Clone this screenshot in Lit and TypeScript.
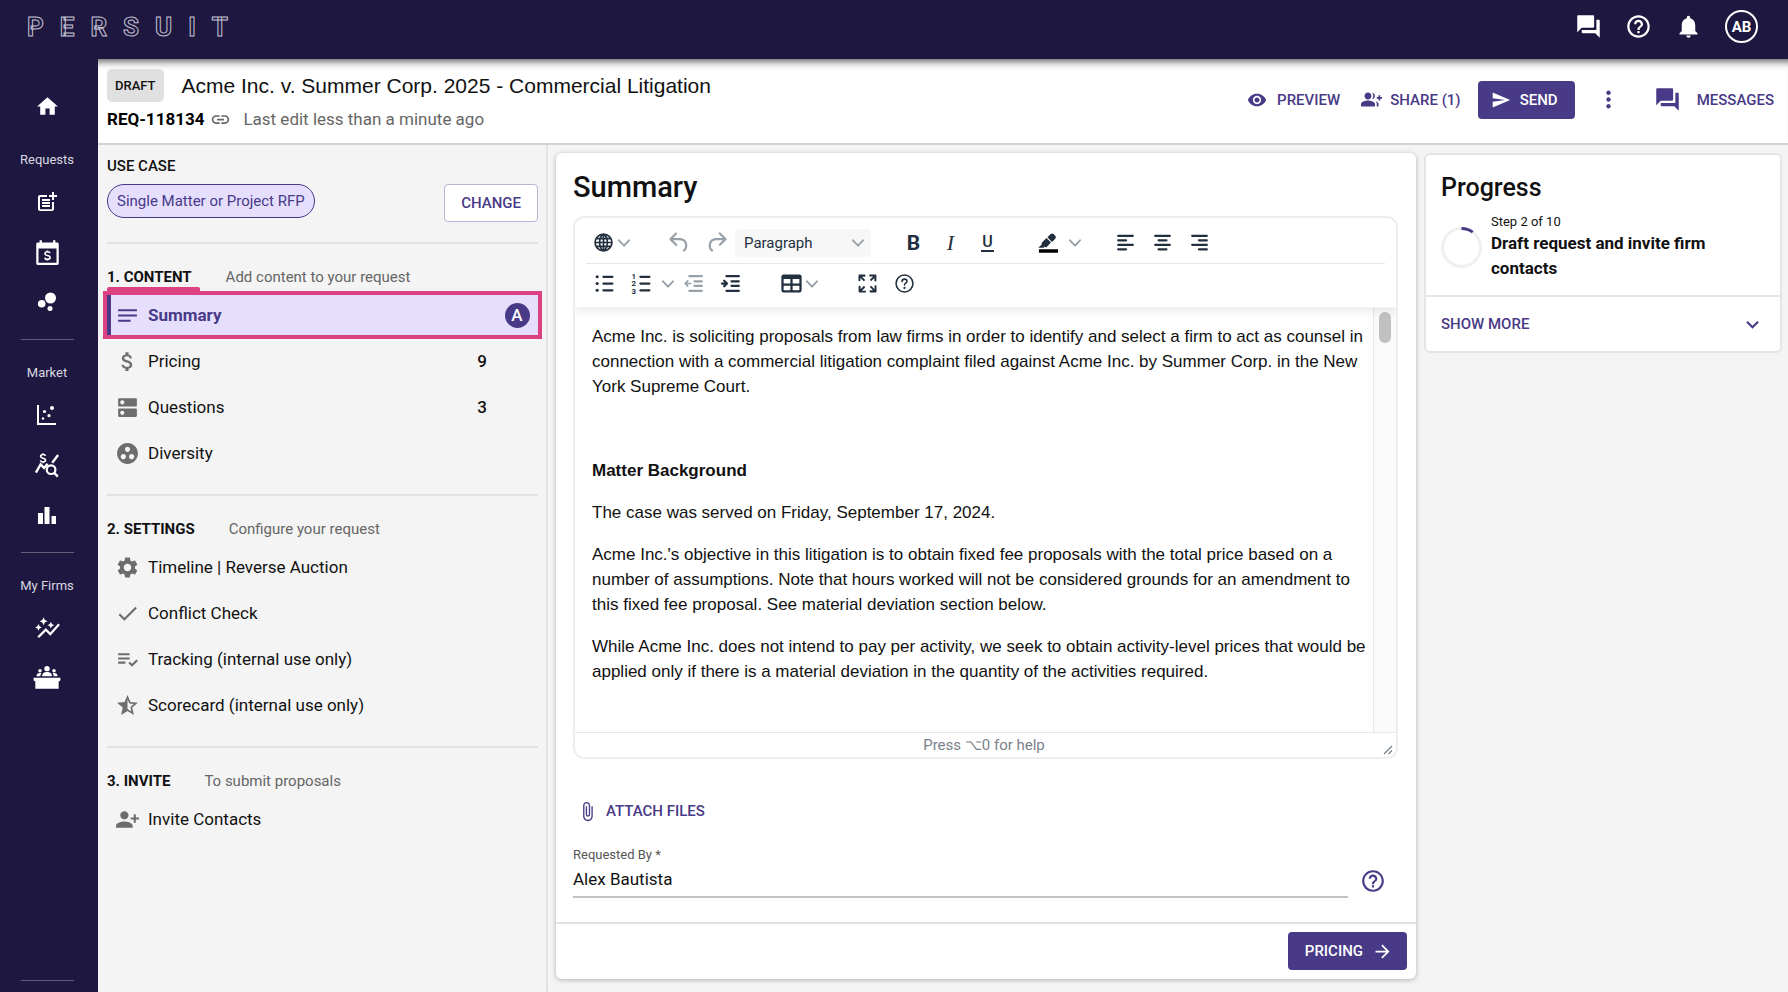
import { LitElement, html, css, svg, nothing, type TemplateResult } from "lit";
import { customElement, state } from "lit/decorators.js";
import { classMap } from "lit/directives/class-map.js";

const P = {
  home: "M10 20v-6h4v6h5v-8h3L12 3 2 12h3v8z",
  forum: "M21 6h-2v9H6v2c0 .55.45 1 1 1h11l4 4V7c0-.55-.45-1-1-1zm-4 6V3c0-.55-.45-1-1-1H3c-.55 0-1 .45-1 1v14l4-4h10c.55 0 1-.45 1-1z",
  help: "M11 18h2v-2h-2v2zm1-16C6.48 2 2 6.48 2 12s4.48 10 10 10 10-4.48 10-10S17.52 2 12 2zm0 18c-4.41 0-8-3.59-8-8s3.59-8 8-8 8 3.59 8 8-3.59 8-8 8zm0-14c-2.21 0-4 1.79-4 4h2c0-1.1.9-2 2-2s2 .9 2 2c0 2-3 1.75-3 5h2c0-2.25 3-2.5 3-5 0-2.21-1.79-4-4-4z",
  bell: "M12 22c1.1 0 2-.9 2-2h-4c0 1.1.89 2 2 2zm6-6v-5c0-3.07-1.64-5.64-4.5-6.32V4c0-.83-.67-1.5-1.5-1.5s-1.5.67-1.5 1.5v.68C7.63 5.36 6 7.92 6 11v5l-2 2v1h16v-1l-2-2z",
  eye: "M12 4.5C7 4.5 2.73 7.61 1 12c1.73 4.39 6 7.5 11 7.5s9.27-3.11 11-7.5c-1.73-4.39-6-7.5-11-7.5zM12 17c-2.76 0-5-2.24-5-5s2.24-5 5-5 5 2.24 5 5-2.24 5-5 5zm0-8c-1.66 0-3 1.34-3 3s1.34 3 3 3 3-1.34 3-3-1.34-3-3-3z",
  groupAdd: "M22 9V7h-2v2h-2v2h2v2h2v-2h2V9zM8 12c2.21 0 4-1.79 4-4s-1.79-4-4-4-4 1.79-4 4 1.79 4 4 4zm0 1c-2.67 0-8 1.34-8 4v3h16v-3c0-2.66-5.33-4-8-4zM12.51 4.05C13.43 5.11 14 6.49 14 8s-.57 2.89-1.49 3.95C14.47 11.7 16 10.04 16 8s-1.53-3.7-3.49-3.95zM16.53 13.83C17.42 14.66 18 15.7 18 17v3h2v-3c0-1.45-1.59-2.51-3.47-3.17z",
  send: "M2.01 21L23 12 2.01 3 2 10l15 2-15 2z",
  more: "M12 8c1.1 0 2-.9 2-2s-.9-2-2-2-2 .9-2 2 .9 2 2 2zm0 2c-1.1 0-2 .9-2 2s.9 2 2 2 2-.9 2-2-.9-2-2-2zm0 6c-1.1 0-2 .9-2 2s.9 2 2 2 2-.9 2-2-.9-2-2-2z",
  link: "M3.9 12c0-1.71 1.39-3.1 3.1-3.1h4V7H7c-2.76 0-5 2.24-5 5s2.24 5 5 5h4v-1.9H7c-1.71 0-3.1-1.39-3.1-3.1zM8 13h8v-2H8v2zm9-6h-4v1.9h4c1.71 0 3.1 1.39 3.1 3.1s-1.39 3.1-3.1 3.1h-4V17h4c2.76 0 5-2.24 5-5s-2.24-5-5-5z",
  notes: "M3 18h12v-2H3v2zM3 6v2h18V6H3zm0 7h18v-2H3v2z",
  money: "M11.8 10.9c-2.27-.59-3-1.2-3-2.15 0-1.09 1.01-1.85 2.7-1.85 1.78 0 2.44.85 2.5 2.1h2.21c-.07-1.72-1.12-3.3-3.21-3.81V3h-3v2.16c-1.94.42-3.5 1.68-3.5 3.61 0 2.31 1.91 3.46 4.7 4.13 2.5.6 3 1.48 3 2.41 0 .69-.49 1.79-2.7 1.79-2.06 0-2.87-.92-2.98-2.1h-2.2c.12 2.19 1.76 3.42 3.68 3.83V21h3v-2.15c1.95-.37 3.5-1.5 3.5-3.55 0-2.84-2.43-3.81-4.7-4.4z",
  dns: "M20 13H4c-.55 0-1 .45-1 1v6c0 .55.45 1 1 1h16c.55 0 1-.45 1-1v-6c0-.55-.45-1-1-1zM7 19c-1.1 0-2-.9-2-2s.9-2 2-2 2 .9 2 2-.9 2-2 2zM20 3H4c-.55 0-1 .45-1 1v6c0 .55.45 1 1 1h16c.55 0 1-.45 1-1V4c0-.55-.45-1-1-1zM7 9c-1.1 0-2-.9-2-2s.9-2 2-2 2 .9 2 2-.9 2-2 2z",
  groupWork: "M12 2C6.48 2 2 6.48 2 12s4.48 10 10 10 10-4.48 10-10S17.52 2 12 2zM8 17.5c-1.38 0-2.5-1.12-2.5-2.5s1.12-2.5 2.5-2.5 2.5 1.12 2.5 2.5-1.12 2.5-2.5 2.5zM9.5 8c0-1.38 1.12-2.5 2.5-2.5s2.5 1.12 2.5 2.5-1.12 2.5-2.5 2.5S9.5 9.38 9.5 8zm6.5 9.5c-1.38 0-2.5-1.12-2.5-2.5s1.12-2.5 2.5-2.5 2.5 1.12 2.5 2.5-1.12 2.5-2.5 2.5z",
  settings: "M19.14 12.94c.04-.3.06-.61.06-.94 0-.32-.02-.64-.07-.94l2.03-1.58c.18-.14.23-.41.12-.61l-1.92-3.32c-.12-.22-.37-.29-.59-.22l-2.39.96c-.5-.38-1.03-.7-1.62-.94l-.36-2.54c-.04-.24-.24-.41-.48-.41h-3.84c-.24 0-.43.17-.47.41l-.36 2.54c-.59.24-1.13.57-1.62.94l-2.39-.96c-.22-.08-.47 0-.59.22L2.74 8.87c-.12.21-.08.47.12.61l2.03 1.58c-.05.3-.09.63-.09.94s.02.64.07.94l-2.03 1.58c-.18.14-.23.41-.12.61l1.92 3.32c.12.22.37.29.59.22l2.39-.96c.5.38 1.03.7 1.62.94l.36 2.54c.05.24.24.41.48.41h3.84c.24 0 .44-.17.47-.41l.36-2.54c.59-.24 1.13-.56 1.62-.94l2.39.96c.22.08.47 0 .59-.22l1.92-3.32c.12-.22.07-.47-.12-.61l-2.01-1.58zM12 15.6c-1.98 0-3.6-1.62-3.6-3.6s1.62-3.6 3.6-3.6 3.6 1.62 3.6 3.6-1.62 3.6-3.6 3.6z",
  check: "M9 16.17L4.83 12l-1.42 1.41L9 19 21 7l-1.41-1.41z",
  listCheck: "M3 10h11v2H3zM3 6h11v2H3zM3 14h7v2H3zM20.59 11.93l-4.25 4.24-2.12-2.12-1.41 1.41 3.53 3.53L22 13.34z",
  starHalf: "M22 9.24l-7.19-.62L12 2 9.19 8.63 2 9.24l5.46 4.73L5.82 21 12 17.27 18.18 21l-1.63-7.03L22 9.24zM12 15.4V6.1l1.71 4.04 4.38.38-3.32 2.88 1 4.28L12 15.4z",
  personAdd: "M13 8c0-2.21-1.79-4-4-4S5 5.79 5 8s1.79 4 4 4 4-1.79 4-4zm2 2v2h3v3h2v-3h3v-2h-3V7h-2v3h-3zM1 18v2h16v-2c0-2.66-5.33-4-8-4s-8 1.34-8 4z",
  postAdd: "M17 19.22H5V7h7V5H5c-1.1 0-2 .9-2 2v12c0 1.1.9 2 2 2h12c1.1 0 2-.9 2-2v-7h-2v7.22zM19 2h-2v3h-3v2h3v3h2V7h3V5h-3V2zM7 9h8v2H7zM7 12v2h8v-2h-3zM7 15h8v2H7z",
  autoGraph: "M14.06 9.94L12 9l2.06-.94L15 6l.94 2.06L18 9l-2.06.94L15 12l-.94-2.06zM4 14l.94-2.06L7 11l-2.06-.94L4 8l-.94 2.06L1 11l2.06.94L4 14zm4.5-5l1.09-2.41L12 5.5 9.59 4.41 8.5 2 7.41 4.41 5 5.5l2.41 1.09L8.5 9zm-4 11.5l6-6.01 4 4L23 8.93l-1.41-1.41-7.09 7.97-4-4L3 19l1.5 1.5z",
  attach: "M16.5 6v11.5c0 2.21-1.79 4-4 4s-4-1.79-4-4V5c0-1.38 1.12-2.5 2.5-2.5s2.5 1.12 2.5 2.5v10.5c0 .55-.45 1-1 1s-1-.45-1-1V6H10v9.5c0 1.38 1.12 2.5 2.5 2.5s2.5-1.12 2.5-2.5V5c0-2.21-1.79-4-4-4S7 2.79 7 5v12.5c0 3.04 2.46 5.5 5.5 5.5s5.5-2.46 5.5-5.5V6h-1.5z",
  arrow: "M12 4l-1.41 1.41L16.17 11H4v2h12.17l-5.58 5.59L12 20l8-8z",
  expand: "M16.59 8.59L12 13.17 7.41 8.59 6 10l6 6 6-6z",
  undo: "M6.4 8H12c3.7 0 6.2 2 6.8 5.1.6 2.7-.4 5.6-2.3 6.8a1 1 0 0 1-1-1.8c1.1-.6 1.8-2.7 1.4-4.6-.5-2.1-2.1-3.5-4.9-3.5H6.4l3.3 3.3a1 1 0 1 1-1.4 1.4l-5-5a1 1 0 0 1 0-1.4l5-5a1 1 0 0 1 1.4 1.4L6.4 8Z",
  redo: "M17.6 10H12c-2.8 0-4.4 1.4-4.9 3.5-.4 2 .3 4 1.4 4.6a1 1 0 1 1-1 1.8c-2-1.2-2.9-4.1-2.3-6.8.6-3 3-5.1 6.8-5.1h5.6l-3.3-3.3a1 1 0 1 1 1.4-1.4l5 5a1 1 0 0 1 0 1.4l-5 5a1 1 0 0 1-1.4-1.4l3.3-3.3Z",
  table: "M19 4a2 2 0 0 1 2 2v12a2 2 0 0 1-2 2H5a2 2 0 0 1-2-2V6c0-1.1.9-2 2-2h14ZM5 14v4h6v-4H5Zm14 0h-6v4h6v-4Zm0-6h-6v4h6V8ZM5 12h6V8H5v4Z",
  fullscreen: "m15.3 10-1.2-1.3 2.9-3h-2.3a.9.9 0 1 1 0-1.7H19c.5 0 .9.4.9.9v4.4a.9.9 0 1 1-1.8 0V7l-2.9 3Zm0 4 3 3v-2.3a.9.9 0 1 1 1.7 0V19c0 .5-.4.9-.9.9h-4.4a.9.9 0 1 1 0-1.8H17l-3-2.9 1.3-1.2ZM10 15.4l-2.9 3h2.3a.9.9 0 1 1 0 1.7H5a.9.9 0 0 1-.9-.9v-4.4a.9.9 0 1 1 1.8 0V17l2.9-3 1.2 1.3ZM8.7 10 5.7 7v2.3a.9.9 0 0 1-1.7 0V5c0-.5.4-.9.9-.9h4.4a.9.9 0 0 1 0 1.8H7l3 2.9-1.3 1.2Z",
  pen: "M7.7 16.7H3l3.3-3.3-.7-.8L10.2 8l4 4.1-4 4.2c-.2.2-.6.2-.8 0l-.6-.7-1.1 1.1zm5-7.5L11 7.4l3-2.9a2 2 0 0 1 2.6 0L18 6c.7.7.7 2 0 2.7l-2.9 2.9-1.8-1.8-.5-.6",
};

const box = (size: number, body: unknown) => html`<svg
  width=${size} height=${size} viewBox="0 0 24 24" fill="currentColor" aria-hidden="true">${body}</svg>`;
const icon = (d: string, size = 24) => box(size, svg`<path d=${d}></path>`);
const lines = (d: string, width = 2) => svg`<path d=${d} fill="none" stroke="currentColor"
  stroke-width=${width} stroke-linecap="round" stroke-linejoin="round"></path>`;

const chevron = html`<svg class="chev" width="12" height="12" viewBox="0 0 10 10" fill="currentColor" aria-hidden="true"><path
  d="M8.7 2.2c.3-.3.8-.3 1 0 .4.4.4.9 0 1.2L5.7 7.8c-.3.3-.9.3-1.2 0L.2 3.4a.8.8 0 0 1 0-1.2c.3-.3.8-.3 1.1 0L5 6l3.7-3.8z"></path></svg>`;

const dollar = "M2.6-2.6C2.4-3.6 1.4-4 0-4s-2.6.7-2.6 2S-1.400-.3 0 0s2.700.7 2.700 2S1.500 4 0 4s-2.600-.6-2.800-1.700M0-5.300V-4M0 4v1.300";

const calendar = box(27, svg`
  <path fill-rule="evenodd" d="M5 1h2v2h10V1h2v2h1.500c.9 0 1.500.6 1.500 1.500v17c0 .9-.6 1.500-1.500 1.500h-17C2.600 23 2 22.400 2 21.500v-17C2 3.600 2.600 3 3.500 3H5zM4 8.500V21h16V8.500z"></path>
  <g transform="translate(12 14.700) scale(.85)"><path d=${dollar} fill="none" stroke="currentColor" stroke-width="1.700"></path></g>`);
const bubbles = box(24, svg`<circle cx="6.700" cy="13.800" r="3.800"></circle><circle cx="15.500" cy="8" r="5.500"></circle><circle cx="15" cy="18.500" r="2.500"></circle>`);
const scatter = box(24, svg`<path d="M2 2h2v18h17v2H2z"></path>
  <circle cx="17" cy="5" r="2"></circle><circle cx="9.500" cy="8.500" r="1.600"></circle>
  <circle cx="14" cy="12.700" r="1.600"></circle><circle cx="8" cy="15.500" r="1.200"></circle>`);
const marketQuery = box(28, svg`
  <g transform="translate(8.600 6.200) scale(.8)"><path d=${dollar} fill="none" stroke="currentColor" stroke-width="1.700"></path></g>
  <path d="M2.500 18.500 6.500 11.500l3 3 3-3.500M16.500 10 21.500 3.500" fill="none" stroke="currentColor" stroke-width="2"></path>
  <circle cx="15.500" cy="16" r="3.700" fill="none" stroke="currentColor" stroke-width="1.900"></circle>
  <path d="m18 18.500 3.300 3.500" stroke="currentColor" stroke-width="2"></path>`);
const bars = box(24, svg`<path d="M3 10h5v11H3zM9.500 4h5v17h-5zM16.500 13h4.500v8h-4.500z"></path>`);
const podium = box(28, svg`
  <circle cx="12" cy="4" r="2.300"></circle><path d="M7.800 10.500c0-2.700 1.800-3.600 4.200-3.600s4.200.9 4.200 3.600z"></path>
  <circle cx="6" cy="5.800" r="1.500"></circle><path d="M3 10.500c0-2 1-2.800 3-2.800.5 0 .9.100 1.200.2-.6.7-.9 1.500-.9 2.600z"></path>
  <circle cx="18" cy="5.800" r="1.500"></circle><path d="M21 10.500c0-2-1-2.800-3-2.800-.5 0-.9.100-1.200.2.6.7.900 1.500.9 2.600z"></path>
  <path d="M.5 11.700h23v1.800c0 .8-.4 1.200-1.200 1.200H22v6.600H2v-6.600h-.3c-.8 0-1.200-.4-1.200-1.200z"></path>`);

const globe = box(27, lines("M12 4.500a7.500 7.500 0 1 0 0 15 7.500 7.500 0 0 0 0-15zM12 4.500c-4.600 3-4.600 12 0 15M12 4.500c4.600 3 4.600 12 0 15M12 4.500v15M4.500 12h15M5.500 8.500h13M5.500 15.500h13", 1.500));
const bullets = box(27, svg`${lines("M11 6h8M11 12h8M11 18h8")}<circle cx="5.500" cy="6" r="1.400"></circle><circle cx="5.500" cy="12" r="1.400"></circle><circle cx="5.500" cy="18" r="1.400"></circle>`);
const numbers = box(27, svg`${lines("M11 6h8M11 12h8M11 18h8")}
  <g font-family="Roboto, sans-serif" font-size="7" font-weight="700"><text x="3" y="8">1</text><text x="3" y="14.500">2</text><text x="3" y="21">3</text></g>`);
const outdent = box(27, svg`${lines("M7.500 5.500h11M12 10h6.500M12 14h6.500M7.500 18.500h11")}${lines("M6 9.700 3.700 12 6 14.300M4.500 12h4", 1.500)}`);
const indent = box(27, svg`${lines("M7.500 5.500h11M12 10h6.500M12 14h6.500M7.500 18.500h11")}${lines("M5.500 9.500 8 12l-2.500 2.500M3.500 12H7", 2)}`);
const alignLeft = box(27, lines("M5.500 6h13M5.500 10h7M5.500 14h13M5.500 18h7"));
const alignCenter = box(27, lines("M5.500 6h13M8.500 10h7M5.500 14h13M8.500 18h7"));
const alignRight = box(27, lines("M5.500 6h13M11.500 10h7M5.500 14h13M11.500 18h7"));
const highlight = box(27, svg`<path d=${P.pen}></path><path d="M3.500 18h17v3h-17z" fill="#000"></path>`);
const toolHelp = box(27, svg`${lines("M12 4.500a7.500 7.500 0 1 0 0 15 7.500 7.500 0 0 0 0-15zM9.800 10.300c0-1.400 1-2.200 2.200-2.200s2.200.8 2.200 2c0 1.600-2.200 1.600-2.200 3.200", 1.400)}<circle cx="12" cy="15.900" r="1"></circle>`);

interface Row { label: string; icon: string; count?: number; badge?: string }
interface Section { title: string; hint: string; marked?: boolean; rows: Row[] }

const SECTIONS: Section[] = [
  { title: "1. CONTENT", hint: "Add content to your request", marked: true, rows: [
    { label: "Summary", icon: P.notes, badge: "A" },
    { label: "Pricing", icon: P.money, count: 9 },
    { label: "Questions", icon: P.dns, count: 3 },
    { label: "Diversity", icon: P.groupWork },
  ] },
  { title: "2. SETTINGS", hint: "Configure your request", rows: [
    { label: "Timeline | Reverse Auction", icon: P.settings },
    { label: "Conflict Check", icon: P.check },
    { label: "Tracking (internal use only)", icon: P.listCheck },
    { label: "Scorecard (internal use only)", icon: P.starHalf },
  ] },
  { title: "3. INVITE", hint: "To submit proposals", rows: [
    { label: "Invite Contacts", icon: P.personAdd },
  ] },
];

const NAV: { label: string; items: { name: string; icon: TemplateResult }[] }[] = [
  { label: "Requests", items: [
    { name: "New request", icon: icon(P.postAdd, 24) },
    { name: "Fee schedule", icon: calendar },
    { name: "Insights", icon: bubbles },
  ] },
  { label: "Market", items: [
    { name: "Market scatter", icon: scatter },
    { name: "Rate search", icon: marketQuery },
    { name: "Benchmarks", icon: bars },
  ] },
  { label: "My Firms", items: [
    { name: "Firm trends", icon: icon(P.autoGraph, 27) },
    { name: "Panel", icon: podium },
  ] },
];

@customElement("app-root")
export class AppRoot extends LitElement {
  @state() private selected = "Summary";

  static styles = css`
    :host {
      --ink: #1e173f;
      --brand: #483a87;
      --tint: #e5defd;
      --line: #e2e6e6;
      display: grid;
      grid-template-rows: auto minmax(0, 1fr);
      min-height: 100vh;
      height: 100vh;
      background: #f4f4f4;
      color: #111;
      font: 400 17px/22px Roboto, sans-serif;
    }
    * { box-sizing: border-box; }
    svg { display: block; flex: none; }
    h1, h2, h3, p, ul { margin: 0; padding: 0; font: inherit; }
    ul { list-style: none; }
    button, input, select { font: inherit; color: inherit; margin: 0; }
    button { background: none; border: 0; padding: 0; cursor: pointer; white-space: nowrap; }
    a { color: inherit; text-decoration: none; }

    .top {
      display: flex; align-items: center; justify-content: space-between;
      height: 59px; padding: 0 30px 6px 27px;
      background: var(--ink); color: #fff;
    }
    .logo {
      display: flex; gap: 16px;
      font-size: 26px; line-height: 30px; font-weight: 700;
      color: var(--ink); -webkit-text-stroke: 1px #c4c1d2;
    }
    .top nav { display: flex; align-items: center; gap: 23px; }
    .avatar {
      width: 33px; height: 33px; border: 2px solid #fff; border-radius: 50%;
      font-size: 15px; line-height: 28px; font-weight: 700;
    }

    .shell { display: grid; grid-template-columns: 98px minmax(0, 1fr); min-height: 0; }
    .side {
      display: flex; flex-direction: column; align-items: center;
      padding: 22px 4px 11px 0; background: var(--ink); color: #fff;
    }
    .side a { display: grid; place-items: center; width: 53px; height: 50px; }
    .side section {
      display: flex; flex-direction: column; align-items: center;
      width: 53px; margin-top: 12px; padding-top: 21px; border-top: 1px solid #625d79;
    }
    .side section:first-of-type { margin-top: 0; padding-top: 16px; border-color: transparent; }
    .side h2 { margin-bottom: 5px; font-size: 13px; line-height: 24px; color: #d9d7e2; white-space: nowrap; }
    .side hr { width: 53px; margin: auto 0 0; border: 0; border-top: 1px solid #625d79; }

    .main { display: grid; grid-template-rows: auto minmax(0, 1fr); min-height: 0; min-width: 0; }
    .bar {
      display: flex; align-items: center; justify-content: space-between;
      padding: 10px 14px 13px 9px; background: #fff; border-bottom: 2px solid #cfd4d4;
      box-shadow: inset 0 10px 9px -8px rgba(0, 0, 0, .7);
    }
    .bar-title { display: flex; align-items: center; gap: 18px; font: 400 21px/33px "Liberation Sans", Arial, sans-serif; }
    .draft {
      padding: 0 8px; border-radius: 5px; background: #e0e0e0;
      font: 500 13px/33px Roboto, sans-serif;
    }
    .bar-meta { display: flex; align-items: center; gap: 6px; margin-top: 6px; color: #666; }
    .bar-meta strong { color: #000; }
    .bar-meta span { margin-left: 6px; }
    .actions { display: flex; align-items: center; color: var(--brand); font-size: 15px; font-weight: 500; }
    .actions button { display: flex; align-items: center; height: 38px; gap: 10px; }
    .actions .share { margin-left: 21px; gap: 8px; }
    .actions .send { margin: 0 20px 0 17px; padding: 0 17px 0 13px; gap: 9px; }
    .actions .messages { margin-left: 32px; gap: 16px; }
    .solid { display: flex; align-items: center; height: 38px; border-radius: 4px; background: var(--brand); color: #fff; font-size: 15px; font-weight: 500; }

    .columns { display: grid; grid-template-columns: 450px minmax(0, 1fr) 364px; min-height: 0; }
    .steps { padding: 10px 8px 0 9px; border-right: 2px solid #e3e3e3; }
    .label { font-size: 15px; font-weight: 500; }
    .case { display: flex; justify-content: space-between; align-items: flex-start; padding: 7px 0 20px; }
    .chip {
      padding: 0 9px; border: 1px solid var(--brand); border-radius: 17px;
      background: var(--tint); color: var(--brand); font-size: 15px; line-height: 32px;
    }
    .change {
      height: 38px; padding: 0 16px; border: 1px solid #b9b3d6; border-radius: 4px;
      background: #fff; color: var(--brand); font-size: 15px; font-weight: 500;
    }
    .step { padding: 22px 0 21px; border-top: 2px solid #e1e1e1; }
    .step header { display: flex; gap: 34px; margin-bottom: 7px; }
    .step header .label { font-weight: 700; }
    .step header p { font-size: 15px; color: #666; }
    .marked .label { position: relative; }
    .marked .label::after {
      content: ""; position: absolute; left: 0; right: -8px; bottom: -5px; height: 6px;
      border-radius: 2px; background: #dc4281;
    }
    .step ul { display: grid; gap: 6px; }
    .row {
      display: grid; grid-template-columns: 25px 1fr 12px 42px; align-items: center;
      column-gap: 8px; width: 100%; height: 40px; padding-left: 8px; text-align: left;
    }
    .row svg { color: #6d6d6d; }
    .row .count { grid-column: 3; font-weight: 500; text-align: center; }
    .row.on {
      padding-left: 4px; border-left: 4px solid var(--brand); background: var(--tint);
      outline: 4px solid #dc4281; color: var(--brand); font-weight: 700;
    }
    .row.on svg { color: var(--brand); }
    .row .badge {
      grid-column: 4; justify-self: center; width: 25px; height: 25px; border-radius: 50%;
      background: var(--brand); color: #fff; font-weight: 500; line-height: 25px; text-align: center;
    }

    .card {
      display: flex; flex-direction: column; min-height: 0;
      margin: 8px 8px 13px; border-radius: 6px; background: #fff;
      box-shadow: 0 1px 5px rgba(0, 0, 0, .28);
    }
    .content { flex: 1; display: flex; flex-direction: column; min-height: 0; padding: 16px 18px 24px 17px; }
    .card h1 { margin-bottom: 11px; font-size: 29px; line-height: 36px; font-weight: 500; }
    .editor {
      flex: 1; display: flex; flex-direction: column; min-height: 200px;
      border: 2px solid #eee; border-radius: 11px; overflow: hidden; color: #222f3e;
    }
    .tools { padding: 4px 11px; box-shadow: 0 3px 8px rgba(34, 47, 62, .1); border-bottom: 1px solid #f3f3f3; z-index: 1; }
    .tools > div { display: flex; gap: 24px; height: 41px; align-items: center; }
    .tools > div + div { height: 40px; border-top: 1px solid #e8e8e8; }
    .group { display: flex; align-items: center; }
    .group button { display: grid; place-items: center; width: 37px; height: 32px; }
    .group .menu { display: flex; align-items: center; gap: 1px; width: 51px; padding-left: 4px; }
    .group .caret { width: 16px; }
    .group .off, .chev { color: #98a0a9; }
    .bold { font-size: 21px; font-weight: 700; }
    .italic { font: italic 400 22px/24px "Liberation Serif", serif; }
    .under span { padding: 0 1px; border-bottom: 2px solid; font-size: 16px; line-height: 17px; font-weight: 500; }
    .format { display: grid; align-items: center; width: 136px; border-radius: 3px; background: #f7f7f7; }
    .format > * { grid-area: 1 / 1; }
    .format select {
      appearance: none; width: 100%; height: 28px; padding: 0 9px; border: 0;
      background: none; font-size: 15px;
    }
    .format svg { justify-self: end; margin-right: 7px; pointer-events: none; }
    .page { flex: 1; display: grid; grid-template-columns: minmax(0, 1fr) 23px; min-height: 0; }
    .text {
      overflow: hidden; padding: 16px 4px 0 17px; outline: 0; color: #111;
      font: 400 17px/25px "Liberation Sans", Arial, sans-serif;
    }
    .text p { margin-bottom: 17px; }
    .scroll { display: flex; justify-content: center; padding-top: 4px; background: #fafafa; border-left: 1px solid #e6e6e6; }
    .scroll i { width: 12px; height: 31px; border-radius: 6px; background: #c1c1c1; }
    .status {
      display: grid; grid-template-columns: 1fr auto 1fr; align-items: center;
      padding-right: 3px; border-top: 1px solid #e8e8e8; color: #7b828c; font-size: 15px; line-height: 24px;
    }
    .status svg { justify-self: end; align-self: end; margin-bottom: 2px; }
    .attach {
      display: flex; align-items: center; align-self: flex-start; gap: 8px; height: 38px;
      margin: 33px 0 16px 4px; color: var(--brand); font-size: 15px; font-weight: 500;
    }
    .field { display: grid; grid-template-columns: 1fr 50px; }
    .field label { grid-column: 1 / -1; font-size: 13px; line-height: 18px; color: #555; }
    .field input { width: 100%; height: 34px; padding: 0 0 2px; border: 0; border-bottom: 2px solid #c2c2c2; background: none; outline: 0; }
    .field button { justify-self: center; align-self: center; color: var(--brand); }
    .card footer { display: flex; justify-content: flex-end; padding: 8px 9px 9px; border-top: 2px solid #e1e1e1; }
    .next { gap: 9px; padding: 0 14px 0 17px; }

    .progress { align-self: start; margin: 8px 6px 0 0; border: 2px solid var(--line); border-radius: 6px; background: #fff; }
    .progress-body { padding: 16px 15px 14px; border-bottom: 2px solid var(--line); }
    .progress h2 { margin-bottom: 8px; font-size: 25px; line-height: 34px; font-weight: 500; }
    .stage { display: flex; align-items: center; gap: 9px; }
    .stage p { font-size: 13px; line-height: 18px; }
    .stage h3 { font-weight: 700; line-height: 25px; }
    .toggle {
      display: flex; align-items: center; justify-content: space-between; width: 100%; height: 54px;
      padding: 0 15px; color: var(--brand); font-size: 15px; font-weight: 500;
    }
  `;

  private renderRow(row: Row) {
    const on = row.label === this.selected;
    return html`<li>
      <button class=${classMap({ row: true, on })} aria-current=${on ? "step" : nothing}
        @click=${() => { this.selected = row.label; }}>
        ${icon(row.icon, 25)}<span>${row.label}</span>
        ${row.count ? html`<span class="count">${row.count}</span>` : nothing}
        ${row.badge ? html`<span class="badge">${row.badge}</span>` : nothing}
      </button>
    </li>`;
  }

  private tool(name: string, body: unknown, cls = "") {
    return html`<button class=${cls} aria-label=${name}>${body}</button>`;
  }

  render() {
    return html`
      <header class="top">
        <div class="logo" role="img" aria-label="Persuit">${[..."PERSUIT"].map((c) => html`<span>${c}</span>`)}</div>
        <nav aria-label="Account">
          <button aria-label="Conversations">${icon(P.forum, 27)}</button>
          <button aria-label="Help">${icon(P.help, 27)}</button>
          <button aria-label="Notifications">${icon(P.bell, 27)}</button>
          <button class="avatar">AB</button>
        </nav>
      </header>
      <div class="shell">
        <nav class="side" aria-label="Primary">
          <a href="#home" aria-label="Home">${icon(P.home, 25)}</a>
          ${NAV.map((g) => html`<section>
            <h2>${g.label}</h2>
            ${g.items.map((i) => html`<a href="#" aria-label=${i.name}>${i.icon}</a>`)}
          </section>`)}
          <hr>
        </nav>
        <div class="main">
          <div class="bar">
            <div>
              <div class="bar-title"><span class="draft">DRAFT</span><span>Acme Inc. v. Summer Corp. 2025 - Commercial Litigation</span></div>
              <div class="bar-meta"><strong>REQ-118134</strong>${icon(P.link, 21)}<span>Last edit less than a minute ago</span></div>
            </div>
            <div class="actions">
              <button>${icon(P.eye, 20)}PREVIEW</button>
              <button class="share">${icon(P.groupAdd, 21)}SHARE (1)</button>
              <button class="solid send">${icon(P.send, 20)}SEND</button>
              <button aria-label="More actions">${icon(P.more, 27)}</button>
              <button class="messages">${icon(P.forum, 27)}MESSAGES</button>
            </div>
          </div>
          <div class="columns">
            <aside class="steps">
              <h2 class="label">USE CASE</h2>
              <div class="case">
                <span class="chip">Single Matter or Project RFP</span>
                <button class="change">CHANGE</button>
              </div>
              ${SECTIONS.map((s) => html`<section class=${classMap({ step: true, marked: !!s.marked })}>
                <header><h2 class="label">${s.title}</h2><p>${s.hint}</p></header>
                <ul>${s.rows.map((r) => this.renderRow(r))}</ul>
              </section>`)}
            </aside>
            <main class="card">
              <div class="content">
                <h1>Summary</h1>
                <div class="editor">
                  <div class="tools" role="toolbar" aria-label="Formatting">
                    <div>
                      <div class="group">${this.tool("Language", [globe, chevron], "menu")}</div>
                      <div class="group">
                        ${this.tool("Undo", icon(P.undo, 27), "off")}${this.tool("Redo", icon(P.redo, 27), "off")}
                        <div class="format">
                          <select aria-label="Block format"><option>Paragraph</option><option>Heading 1</option><option>Heading 2</option></select>
                          ${chevron}
                        </div>
                      </div>
                      <div class="group">
                        ${this.tool("Bold", "B", "bold")}${this.tool("Italic", "I", "italic")}${this.tool("Underline", html`<span>U</span>`, "under")}
                      </div>
                      <div class="group">${this.tool("Text color", highlight)}${this.tool("Choose color", chevron, "caret")}</div>
                      <div class="group">
                        ${this.tool("Align left", alignLeft)}${this.tool("Align center", alignCenter)}${this.tool("Align right", alignRight)}
                      </div>
                    </div>
                    <div>
                      <div class="group">
                        ${this.tool("Bullet list", bullets)}${this.tool("Numbered list", numbers)}${this.tool("List style", chevron, "caret")}
                        ${this.tool("Decrease indent", outdent, "off")}${this.tool("Increase indent", indent)}
                      </div>
                      <div class="group">${this.tool("Table", [icon(P.table, 27), chevron], "menu")}</div>
                      <div class="group">${this.tool("Fullscreen", icon(P.fullscreen, 27))}${this.tool("Help", toolHelp)}</div>
                    </div>
                  </div>
                  <div class="page">
                    <div class="text" contenteditable="true" role="textbox" aria-multiline="true" aria-label="Summary text">
                      <p>Acme Inc. is soliciting proposals from law firms in order to identify and select a firm to act as counsel in connection with a commercial litigation complaint filed against Acme Inc. by Summer Corp. in the New York Supreme Court.</p>
                      <p><br></p>
                      <p><strong>Matter Background</strong></p>
                      <p>The case was served on Friday, September 17, 2024.</p>
                      <p>Acme Inc.'s objective in this litigation is to obtain fixed fee proposals with the total price based on a number of assumptions. Note that hours worked will not be considered grounds for an amendment to this fixed fee proposal. See material deviation section below.</p>
                      <p>While Acme Inc. does not intend to pay per activity, we seek to obtain activity-level prices that would be applied only if there is a material deviation in the quantity of the activities required.</p>
                    </div>
                    <div class="scroll"><i></i></div>
                  </div>
                  <div class="status">
                    <span></span><span>Press ⌥0 for help</span>
                    <svg width="10" height="10" viewBox="0 0 10 10" stroke="#7b828c" stroke-width="1.300" aria-hidden="true"><path d="M1 9 9 1M5.500 9 9 5.500"></path></svg>
                  </div>
                </div>
                <button class="attach">${icon(P.attach, 21)}ATTACH FILES</button>
                <div class="field">
                  <label for="requested">Requested By *</label>
                  <input id="requested" value="Alex Bautista" required>
                  <button aria-label="About this field">${icon(P.help, 26)}</button>
                </div>
              </div>
              <footer><button class="solid next">PRICING${icon(P.arrow, 21)}</button></footer>
            </main>
            <aside class="progress">
              <div class="progress-body">
                <h2>Progress</h2>
                <div class="stage">
                  <svg width="41" height="41" viewBox="0 0 41 41" fill="none" stroke-width="3" role="img" aria-label="Step 2 of 10">
                    <circle cx="20.500" cy="20.500" r="19" stroke="#f0f0f0"></circle>
                    <path d="M20.500 1.500a19 19 0 0 1 11.200 3.600" stroke="var(--brand)"></path>
                  </svg>
                  <div><p>Step 2 of 10</p><h3>Draft request and invite firm contacts</h3></div>
                </div>
              </div>
              <button class="toggle">SHOW MORE${icon(P.expand, 25)}</button>
            </aside>
          </div>
        </div>
      </div>
    `;
  }
}
